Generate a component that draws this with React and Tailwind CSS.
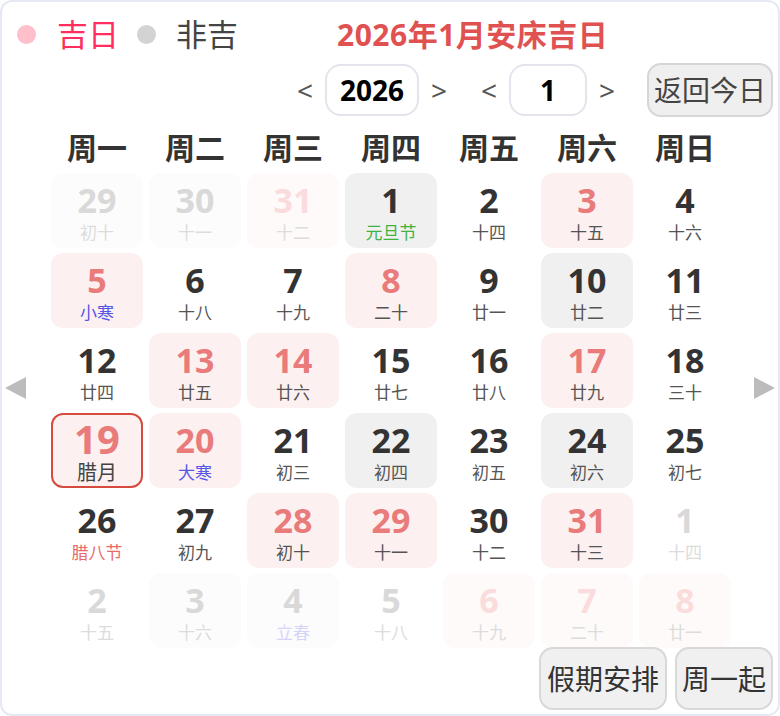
const FONT = { fontFamily: '"Noto Sans", "Noto Sans CJK SC", sans-serif' };

// kind: n = normal, g = 吉日 (pink), x = 非吉 (grey); faint = other month
const rows = [
  [['29', '初十', 'x', 1], ['30', '十一', 'x', 1], ['31', '十二', 'g', 1], ['1', '元旦节', 'x', 0, 'hol'], ['2', '十四', 'n'], ['3', '十五', 'g'], ['4', '十六', 'n']],
  [['5', '小寒', 'g', 0, 'term'], ['6', '十八', 'n'], ['7', '十九', 'n'], ['8', '二十', 'g'], ['9', '廿一', 'n'], ['10', '廿二', 'x'], ['11', '廿三', 'n']],
  [['12', '廿四', 'n'], ['13', '廿五', 'g'], ['14', '廿六', 'g'], ['15', '廿七', 'n'], ['16', '廿八', 'n'], ['17', '廿九', 'g'], ['18', '三十', 'n']],
  [['19', '腊月', 'sel'], ['20', '大寒', 'g', 0, 'term'], ['21', '初三', 'n'], ['22', '初四', 'x'], ['23', '初五', 'n'], ['24', '初六', 'x'], ['25', '初七', 'n']],
  [['26', '腊八节', 'n', 0, 'fest'], ['27', '初九', 'n'], ['28', '初十', 'g'], ['29', '十一', 'g'], ['30', '十二', 'n'], ['31', '十三', 'g'], ['1', '十四', 'n', 1]],
  [['2', '十五', 'n', 1], ['3', '十六', 'x', 1], ['4', '立春', 'x', 1, 'term'], ['5', '十八', 'n', 1], ['6', '十九', 'g', 1], ['7', '二十', 'g', 1], ['8', '廿一', 'g', 1]],
];

const weekdays = ['周一', '周二', '周三', '周四', '周五', '周六', '周日'];

function DayCell({ d }) {
  const [num, lunar, kind, faint, tag] = d;

  if (kind === 'sel') {
    return (
      <div className="h-[75px] rounded-[12px] border-2 border-[#d64a40] bg-[#fcf1f0] flex flex-col items-center pt-[1px]">
        <div className="text-[40px] leading-[46px] font-bold text-[#e97b7b]">{num}</div>
        <div className="text-[20px] leading-[22px] text-[#444]">{lunar}</div>
      </div>
    );
  }

  let bg = '';
  if (!faint && kind === 'g') bg = 'bg-[#fcf1f0]';
  if (!faint && kind === 'x') bg = 'bg-[#f0f0f0]';
  if (faint && kind === 'x') bg = 'bg-[#fcfcfc]';
  if (faint && kind === 'g') bg = 'bg-[#fefaf9]';

  let numColor = kind === 'g' ? 'text-[#e97b7b]' : 'text-[#333]';
  if (faint) numColor = kind === 'g' ? 'text-[#fadcdc]' : 'text-[#d9d9d9]';

  let lunarColor = faint ? 'text-[#dcdcdc]' : 'text-[#555]';
  if (tag === 'hol') lunarColor = 'text-[#3fb23f]';
  if (tag === 'term') lunarColor = faint ? 'text-[#d4d4fa]' : 'text-[#5656e6]';
  if (tag === 'fest') lunarColor = 'text-[#e96a6a]';

  return (
    <div className={`h-[75px] rounded-[12px] flex flex-col items-center pt-[7px] ${bg}`}>
      <div className={`text-[34px] leading-[40px] font-bold ${numColor}`}>{num}</div>
      <div className={`text-[17px] leading-[22px] mt-[2px] ${lunarColor}`}>{lunar}</div>
    </div>
  );
}

export default function App() {
  return (
    <div style={FONT} className="w-[780px] h-[716px] bg-white border-2 border-[#e6e9f4] rounded-[12px] overflow-hidden">
      {/* legend + title */}
      <div className="h-[48px] mt-[8px] flex items-center pl-[15px]">
        <span className="w-[19px] h-[19px] rounded-full bg-[#ffc0cb]" />
        <span className="ml-[21px] text-[31px] text-[#ff2e5e]">吉日</span>
        <span className="ml-[18px] w-[19px] h-[19px] rounded-full bg-[#d3d3d3]" />
        <span className="ml-[20px] text-[31px] text-[#444]">非吉</span>
        <span className="ml-[99px] text-[30px] tracking-[0.5px] font-bold text-[#e05252]">2026年1月安床吉日</span>
      </div>

      {/* year / month nav */}
      <div className="flex justify-end items-center pr-[5px] mt-[5px] h-[54px]">
        <span className="w-[40px] text-center text-[28px] text-[#555]">&lt;</span>
        <div className="w-[94px] h-[52px] rounded-[16px] border-2 border-[#e4e4ec] flex items-center justify-center text-[28px] font-bold text-black">2026</div>
        <span className="w-[40px] text-center text-[28px] text-[#555]">&gt;</span>
        <span className="ml-[10px] w-[40px] text-center text-[28px] text-[#555]">&lt;</span>
        <div className="w-[78px] h-[52px] rounded-[16px] border-2 border-[#e4e4ec] flex items-center justify-center text-[28px] font-bold text-black">1</div>
        <span className="w-[40px] text-center text-[28px] text-[#555]">&gt;</span>
        <button className="ml-[20px] w-[126px] h-[54px] rounded-[14px] border-2 border-[#d6d6d6] bg-[#efefef] text-[28px] text-[#444]">返回今日</button>
      </div>

      {/* calendar body */}
      <div className="flex items-center mt-[11px]">
        <div className="w-[49px] pl-[3px]">
          <svg width="21" height="22" viewBox="0 0 21 22"><polygon points="21,0 21,22 0,11" fill="#bcbcbc" /></svg>
        </div>
        <div className="w-[680px]">
          <div className="grid grid-cols-7 gap-x-[6px] h-[40px] items-center">
            {weekdays.map((w) => (
              <div key={w} className="text-center text-[30px] leading-[40px] font-bold text-[#333]">{w}</div>
            ))}
          </div>
          <div className="grid grid-cols-7 gap-x-[6px] gap-y-[5px] mt-[5px]">
            {rows.flat().map((d, i) => (
              <DayCell key={i} d={d} />
            ))}
          </div>
        </div>
        <div className="w-[47px] pl-[23px]">
          <svg width="21" height="22" viewBox="0 0 21 22"><polygon points="0,0 0,22 21,11" fill="#bcbcbc" /></svg>
        </div>
      </div>

      {/* footer buttons */}
      <div className="flex justify-end gap-[8px] pr-[5px] -mt-[1px]">
        <button className="w-[128px] h-[63px] rounded-[14px] border-2 border-[#d8d8d8] bg-[#f0f0f0] text-[28px] text-[#333]">假期安排</button>
        <button className="w-[98px] h-[63px] rounded-[14px] border-2 border-[#d8d8d8] bg-[#f0f0f0] text-[28px] text-[#333]">周一起</button>
      </div>
    </div>
  );
}
